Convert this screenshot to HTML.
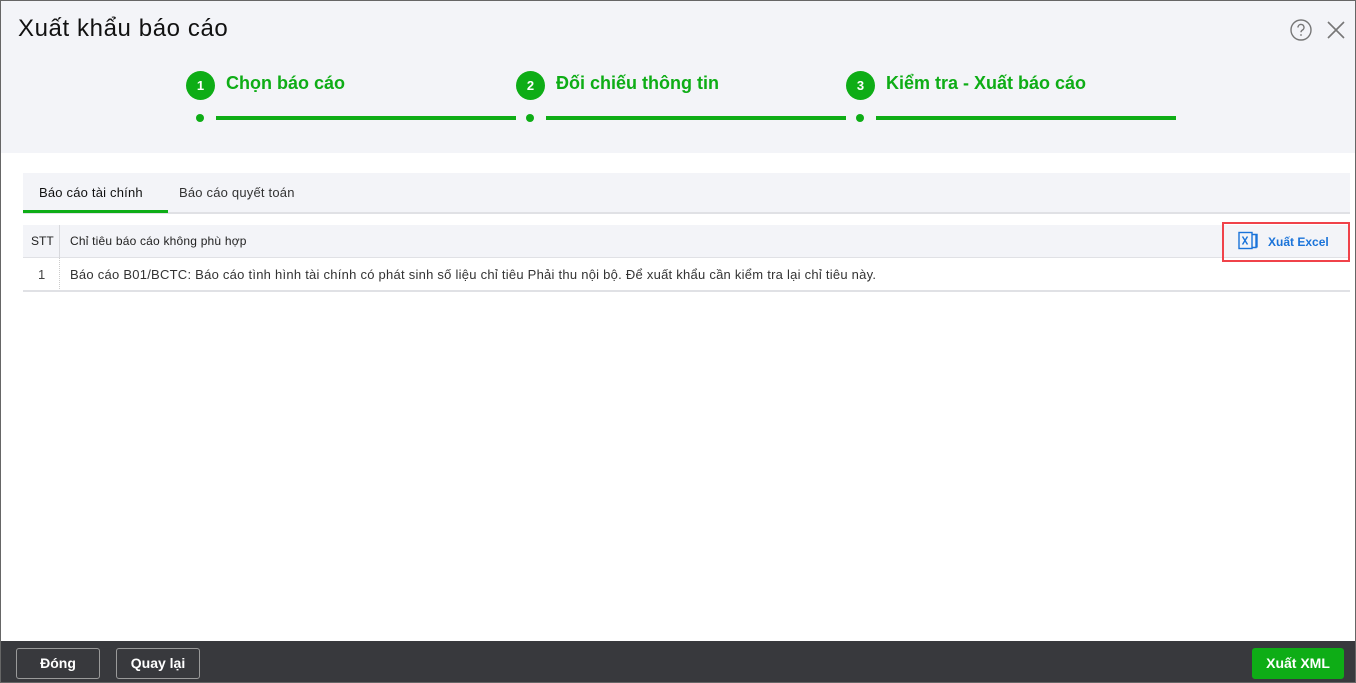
<!DOCTYPE html>
<html><head><meta charset="utf-8"><style>
*{box-sizing:border-box;margin:0;padding:0}
body{width:1356px;height:683px;overflow:hidden;font-family:"Liberation Sans","DejaVu Sans",sans-serif;background:#fff;position:relative}
.frame{position:absolute;left:0;top:0;width:1356px;height:683px;border:1px solid #666;}
.hdr{position:absolute;left:1px;top:1px;width:1354px;height:152px;background:#f3f4f8}
.title{position:absolute;left:18px;top:15px;font-size:24px;letter-spacing:0.6px;color:#111}
.circ{position:absolute;width:29px;height:29px;border-radius:50%;background:#0ead16;color:#fff;font-size:13px;font-weight:bold;text-align:center;line-height:29px;top:71px}
.stxt{position:absolute;top:73px;font-size:18px;color:#0ead16;font-weight:bold}
.dot{position:absolute;width:8px;height:8px;border-radius:50%;background:#0ead16;top:114px}
.line{position:absolute;height:4px;background:#0ead16;top:116px;width:300px}
.abs{position:absolute}
.foot{position:absolute;left:1px;top:641px;width:1354px;height:41px;background:#38393d}
.btn{position:absolute;top:648px;height:31px;border:1px solid #9a9a9a;border-radius:3px;color:#fff;font-weight:bold;font-size:14px;text-align:center;line-height:29px}
</style></head><body>
<div class="hdr"></div>
<div class="title">Xuất khẩu báo cáo</div>
<svg class="abs" style="left:1290px;top:19px" width="22" height="22" viewBox="0 0 22 22"><circle cx="11" cy="11" r="10" fill="none" stroke="#777" stroke-width="1.4"/><path d="M8 8.5a3 3 0 1 1 4.5 2.5c-1 .6-1.5 1.2-1.5 2.3" fill="none" stroke="#777" stroke-width="1.4"/><circle cx="11" cy="16" r="0.9" fill="#777"/></svg>
<svg class="abs" style="left:1326px;top:20px" width="20" height="20" viewBox="0 0 20 20"><path d="M2 2L18 18M18 2L2 18" stroke="#777" stroke-width="1.6"/></svg>

<div class="circ" style="left:186px">1</div><div class="stxt" style="left:226px">Chọn báo cáo</div>
<div class="dot" style="left:196px"></div><div class="line" style="left:216px"></div>
<div class="circ" style="left:516px">2</div><div class="stxt" style="left:556px">Đối chiếu thông tin</div>
<div class="dot" style="left:526px"></div><div class="line" style="left:546px"></div>
<div class="circ" style="left:846px">3</div><div class="stxt" style="left:886px">Kiểm tra - Xuất báo cáo</div>
<div class="dot" style="left:856px"></div><div class="line" style="left:876px"></div>

<div class="abs" style="left:23px;top:173px;width:1327px;height:41px;background:#f3f4f8;border-bottom:2px solid #e0e1e5"></div>
<div class="abs" style="left:23px;top:210px;width:145px;height:3px;background:#0ead16"></div>
<div class="abs" style="left:39px;top:185px;font-size:13px;color:#111;letter-spacing:0.2px">Báo cáo tài chính</div>
<div class="abs" style="left:179px;top:185px;font-size:13px;color:#333;letter-spacing:0.2px">Báo cáo quyết toán</div>

<div class="abs" style="left:23px;top:225px;width:1327px;height:33px;background:#f3f4f8;border-bottom:1px solid #e0e1e5"></div>
<div class="abs" style="left:59px;top:225px;width:1px;height:33px;background:#d8d9dd"></div>
<div class="abs" style="left:59px;top:258px;width:0;height:33px;border-left:1px dotted #ccc"></div>
<div class="abs" style="left:31px;top:234px;font-size:12px;color:#222">STT</div>
<div class="abs" style="left:70px;top:234px;font-size:12px;color:#222;letter-spacing:0.2px">Chỉ tiêu báo cáo không phù hợp</div>
<div class="abs" style="left:38px;top:267px;font-size:13px;color:#444">1</div>
<div class="abs" style="left:70px;top:267px;font-size:13px;color:#333;letter-spacing:0.25px">Báo cáo B01/BCTC: Báo cáo tình hình tài chính có phát sinh số liệu chỉ tiêu Phải thu nội bộ. Để xuất khẩu cần kiểm tra lại chỉ tiêu này.</div>
<div class="abs" style="left:23px;top:290px;width:1327px;height:2px;background:#e0e1e5"></div>

<div class="abs" style="left:1222px;top:222px;width:128px;height:40px;border:2px solid #f0424a"></div>
<svg class="abs" style="left:1238px;top:231px" width="22" height="20" viewBox="0 0 22 20"><rect x="1" y="1.5" width="13" height="16" fill="none" stroke="#1a73d9" stroke-width="1.4"/><path d="M14 3.5h4v13h-4M18 3.5l1 0v13" fill="none" stroke="#1a73d9" stroke-width="1.4"/><path d="M4.5 5.5l5 8M9.5 5.5l-5 8" stroke="#1a73d9" stroke-width="1.4"/></svg>
<div class="abs" style="left:1268px;top:235px;font-size:12px;font-weight:bold;color:#1a73d9">Xuất Excel</div>

<div class="foot"></div>
<div class="btn" style="left:16px;width:84px">Đóng</div>
<div class="btn" style="left:116px;width:84px">Quay lại</div>
<div class="btn" style="left:1252px;width:92px;background:#0ead16;border-color:#0ead16">Xuất XML</div>
<div class="frame"></div>
</body></html>
